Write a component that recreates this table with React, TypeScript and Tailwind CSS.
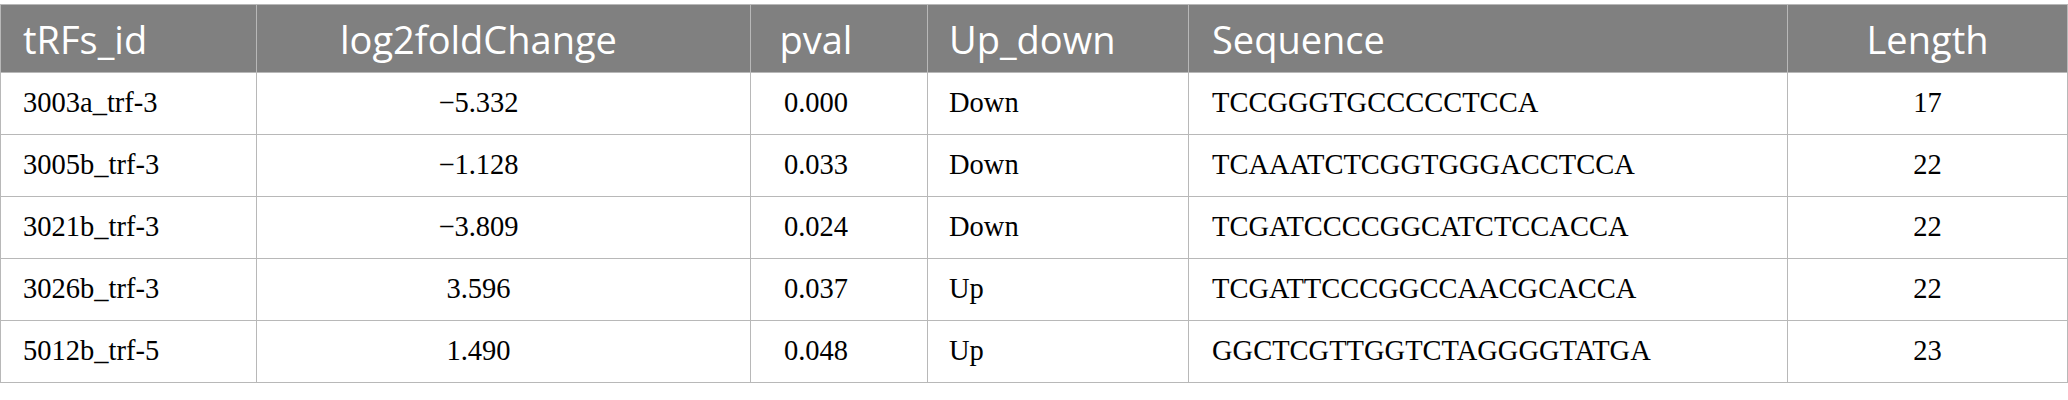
import React from "react";

const rows = [
  ["3003a_trf-3", "\u22125.332", "0.000", "Down", "TCCGGGTGCCCCCTCCA", "17"],
  ["3005b_trf-3", "\u22121.128", "0.033", "Down", "TCAAATCTCGGTGGGACCTCCA", "22"],
  ["3021b_trf-3", "\u22123.809", "0.024", "Down", "TCGATCCCCGGCATCTCCACCA", "22"],
  ["3026b_trf-3", "3.596", "0.037", "Up", "TCGATTCCCGGCCAACGCACCA", "22"],
  ["5012b_trf-5", "1.490", "0.048", "Up", "GGCTCGTTGGTCTAGGGGTATGA", "23"],
];

const cellCls = [
  "text-left pl-[22px] pr-[22px]",
  "text-center pl-[22px] pr-[72px]",
  "text-center pl-[14px] pr-[60px]",
  "text-left pl-[21px] pr-[21px]",
  "text-left pl-[23px] pr-[22px]",
  "text-center pl-[22px] pr-[22px]",
];
const headers = ["tRFs_id", "log2foldChange", "pval", "Up_down", "Sequence", "Length"];

export default function App() {
  return (
    <div className="bg-white pt-[4px] w-[2068px] h-[400px]">
      <table className="table-fixed border-collapse w-[2067px]">
        <colgroup>
          <col className="w-[256px]" />
          <col className="w-[494px]" />
          <col className="w-[177px]" />
          <col className="w-[261px]" />
          <col className="w-[599px]" />
          <col className="w-[280px]" />
        </colgroup>
        <thead>
          <tr className="h-[68px] bg-[#808080]">
            {headers.map((h, i) => (
              <th
                key={h}
                className={`${cellCls[i]} border-[1.5px] border-[#b8b8b8] font-normal text-white text-[38px] leading-none font-['Open_Sans',sans-serif]`}
              >
                {h}
              </th>
            ))}
          </tr>
        </thead>
        <tbody>
          {rows.map((r) => (
            <tr key={r[0]} className="h-[62px]">
              {r.map((c, i) => (
                <td
                  key={i}
                  className={`${cellCls[i]} border-[1.5px] border-[#b8b8b8] text-black text-[28.5px] leading-none font-['Liberation_Serif',serif]`}
                >
                  {c}
                </td>
              ))}
            </tr>
          ))}
        </tbody>
      </table>
    </div>
  );
}
